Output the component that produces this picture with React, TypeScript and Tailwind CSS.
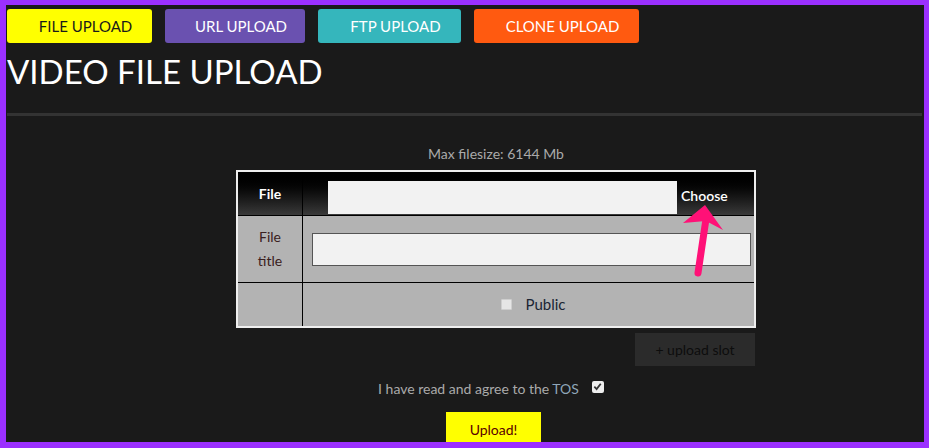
import React from "react"

const tabs = [
  { label: "FILE UPLOAD", cls: "bg-[#ffff00] text-[#1a1a1a] w-[145px]" },
  { label: "URL UPLOAD", cls: "bg-[#6a51b0] text-white w-[140px]" },
  { label: "FTP UPLOAD", cls: "bg-[#35b6bc] text-white w-[143px]" },
  { label: "CLONE UPLOAD", cls: "bg-[#ff5a10] text-white w-[165px]" },
]

function PinkArrow() {
  return (
    <svg
      className="absolute left-[-6px] top-[-5px] pointer-events-none"
      width="929"
      height="448"
      viewBox="0 0 929 448"
    >
      <line x1="706" y1="219" x2="698" y2="273" stroke="#ff1177" strokeWidth="7" strokeLinecap="round" />
      <polygon points="705,205 723,230 706,221 683,223" fill="#ff1177" />
    </svg>
  )
}

export default function App() {
  return (
    <div
      className="relative w-[929px] h-[448px] overflow-hidden bg-[#1a1a1a] border-solid border-[#9b30ff] border-l-[6px] border-t-[5px] border-r-[5px] border-b-[6px]"
      style={{ fontFamily: "Lato, 'Open Sans', sans-serif" }}
    >
      <div className="flex gap-[13px] pt-[4px] pl-[1px]">
        {tabs.map((t) => (
          <div
            key={t.label}
            className={`h-[34px] rounded-[3px] flex items-center justify-center pl-[12px] text-[15px] ${t.cls}`}
          >
            {t.label}
          </div>
        ))}
      </div>

      <h1 className="mt-[8px] pl-[1px] text-[33px] leading-[41px] text-white font-normal">VIDEO FILE UPLOAD</h1>

      <div className="mt-[21px] ml-[1px] mr-[2px] h-[3px] bg-[#333333]" />

      <div className="ml-[230px] w-[520px] flex flex-col">
        <div className="mt-[29px] text-center text-[14px] leading-[18px] text-[#aaaaaa]">Max filesize: 6144 Mb</div>

        <div className="mt-[7px] border-2 border-[#eeeeee] flex flex-col">
          <div className="flex h-[44px] border-b border-black bg-gradient-to-b from-black to-[#3a3a3a]">
            <div className="w-[65px] border-r border-black flex items-center justify-center text-white font-bold text-[14px]">
              File
            </div>
            <div className="flex-1 flex items-end pb-[1px] pl-[25px]">
              <div className="w-[349px] h-[33px] bg-[#f2f2f2]" />
              <span className="ml-[4px] mb-[8px] text-white text-[14px] font-semibold">Choose</span>
            </div>
          </div>

          <div className="flex h-[67px] border-b border-black bg-[#b3b3b3]">
            <div className="w-[65px] border-r border-black flex items-center justify-center text-center text-[14px] leading-[24px] text-[#3a2020]">
              File
              <br />
              title
            </div>
            <div className="flex-1 flex items-center pl-[9px] pr-[3px]">
              <div className="w-full h-[33px] bg-[#f2f2f2] border border-[#555555]" />
            </div>
          </div>

          <div className="flex h-[43px] bg-[#b3b3b3]">
            <div className="w-[65px] border-r border-black" />
            <div className="flex-1 flex items-center justify-center gap-[13px] pl-[10px]">
              <span className="w-[11px] h-[11px] bg-[#e6e6e6] border border-[#cfcfcf] rounded-[1px]" />
              <span className="text-[15px] text-[#1a2533]">Public</span>
            </div>
          </div>
        </div>

        <div className="mt-[5px] self-end mr-[1px] w-[120px] h-[33px] bg-[#2b2b2b] flex items-center justify-center text-[14px] text-[#0d0d0d]">
          + upload slot
        </div>

        <div className="mt-[14px] flex items-center justify-center pr-[10px] text-[14px] leading-[18px] text-[#aaaaaa]">
          <span>
            I have read and agree to the <span className="text-[#8fa6b8]">TOS</span>
          </span>
          <span className="ml-[13px] mb-[5px] w-[12px] h-[12px] bg-[#eeeeee] rounded-[2px] flex items-center justify-center">
            <svg width="9" height="9" viewBox="0 0 10 10">
              <path d="M1.5 5.2 L4 7.8 L8.6 2" fill="none" stroke="#333" strokeWidth="2" />
            </svg>
          </span>
        </div>

        <div className="mt-[14px] self-center mr-[5px] w-[95px] h-[34px] bg-[#ffff00] flex items-center justify-center text-[14px] text-[#5a0000]">
          Upload!
        </div>
      </div>

      <PinkArrow />
    </div>
  )
}
